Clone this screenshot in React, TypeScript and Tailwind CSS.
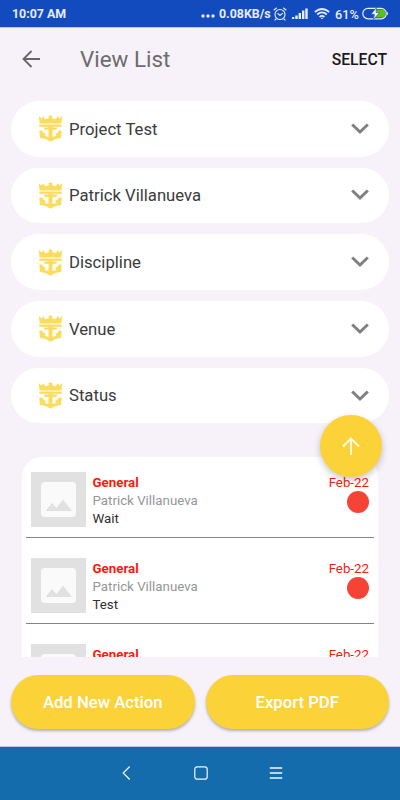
const FILTERS = ["Project Test", "Patrick Villanueva", "Discipline", "Venue", "Status"];

const ACTIONS = [
  { category: "General", owner: "Patrick Villanueva", note: "Wait", date: "Feb-22" },
  { category: "General", owner: "Patrick Villanueva", note: "Test", date: "Feb-22" },
  { category: "General", owner: "Patrick Villanueva", note: "", date: "Feb-22" },
];

function CrownAnchor() {
  return (
    <svg viewBox="0 0 74 82" className="w-[25px] h-[27px] shrink-0" fill="#fbdc5e">
      <path d="M1 3L9 11L15 4L21 13L31 10L33 8L30 5L37 0L44 5L41 8L43 10L53 13L59 4L65 11L73 3L70 26H4Z" />
      <path d="M3 29H71V36H3Z" />
      <path d="M30 36H44V38H56V45H43V66H48Q54 65 55 61L49 58Q59 55 63 47H71L69 70Q51 71 37 81Q23 71 5 70L3 47H11Q15 55 25 58L19 61Q20 65 26 66H31V45H18V38H30Z" />
    </svg>
  );
}

function Thumbnail() {
  return (
    <svg viewBox="0 0 55 55" className="w-[55px] h-[55px] shrink-0">
      <rect width="55" height="55" fill="#e1e1e1" />
      <rect x="10" y="10" width="35" height="35" rx="4" fill="#fafafa" />
      <path d="M14.5 39L21 31L25.5 36L32 27.500L41 39Z" fill="#e1e1e1" />
    </svg>
  );
}

function StatusBar() {
  return (
    <div className="h-7 shrink-0 bg-[#124bbe] border-b border-[#b9c6ea] flex items-center pt-[2px] pl-3 pr-[11px] text-[12.4px] font-bold text-[#e7edfb]">
      <span>10:07 AM</span>
      <div className="ml-auto flex items-center">
        <svg viewBox="0 0 14 4" className="w-[14px] h-1 mt-1 mr-1" fill="#e7edfb">
          <circle cx="2" cy="2" r="1.700" />
          <circle cx="7" cy="2" r="1.700" />
          <circle cx="12" cy="2" r="1.700" />
        </svg>
        <span className="w-[51px] whitespace-nowrap">0.08KB/s</span>
        <svg viewBox="0 0 14 14" className="w-[14px] h-[14px] ml-[3px] -mt-px" fill="none" stroke="#e7edfb" strokeWidth="1.100" strokeLinecap="round">
          <circle cx="7" cy="7.500" r="5" />
          <path d="M1 3L3.500 1M13 3L10.500 1M4.800 6.500L7 8.500L9.500 6.300M3 12L2 13M11 12L12 13" />
        </svg>
        <svg viewBox="0 0 16 12" className="w-4 h-3 ml-[5px] -mt-px" fill="#e7edfb">
          <path d="M0 9H2.300V11H0ZM3.300 7.500H5.700V11H3.300ZM6.600 5H9V11H6.600ZM10 2.500H12.400V11H10ZM13.300 0.500H15.700V11H13.300Z" />
        </svg>
        <svg viewBox="0 0 16 12" className="w-4 h-3 ml-[6px] -mt-px" fill="none" stroke="#e7edfb" strokeWidth="1.700">
          <path d="M0.800 4Q8 -2 15.200 4M3.200 6.500Q8 2.300 12.800 6.500M5.500 8.800Q8 6.800 10.500 8.800" />
          <path d="M6.500 9.800H9.500L8 11.300Z" fill="#e7edfb" stroke="none" />
        </svg>
        <span className="ml-[5px] w-[24px] whitespace-nowrap font-medium text-[12.700px]">61%</span>
        <svg viewBox="0 0 27 13" className="w-[27px] h-[13px] ml-[3px] -mt-px">
          <rect x="0.800" y="1.300" width="23.500" height="10.500" rx="5.200" fill="none" stroke="#e7edfb" strokeWidth="1.200" />
          <path d="M14 2.500H19.500A4 4 0 0 1 19.500 10.600H11Z" fill="#5ac50c" />
          <path d="M25 4.500Q27 6.500 25 8.500Z" fill="#e7edfb" />
          <path d="M14.500 0.500L9 7.300H12.500L11.500 12.500L17.500 5.600H14Z" fill="#f4f7ff" stroke="#124bbe" strokeWidth="0.600" />
        </svg>
      </div>
    </div>
  );
}

function FilterCard({ label }: { label: string }) {
  return (
    <button className="w-full h-[55.500px] rounded-full bg-white flex items-center pl-[27px] pr-5 text-left">
      <CrownAnchor />
      <span className="ml-[6px] pt-[1px] text-[16.700px] text-[#3b3b3b]">{label}</span>
      <svg viewBox="0 0 18 12" className="w-[18px] h-3 ml-auto" fill="none" stroke="#808080" strokeWidth="3">
        <path d="M1.200 1.500L9 9L16.800 1.500" />
      </svg>
    </button>
  );
}

function ActionRow({ action }: { action: (typeof ACTIONS)[number] }) {
  return (
    <div className="mx-1 h-[86px] shrink-0 border-b border-[#858589] flex items-start pt-[20px] pl-[5px] pr-[5px]">
      <Thumbnail />
      <div className="ml-[6.500px] pt-[2px] text-[13.300px] leading-[18.200px]">
        <p className="font-bold text-[#f91b0c]">{action.category}</p>
        <p className="text-[#969696]">{action.owner}</p>
        {action.note && <p className="text-[#303030]">{action.note}</p>}
      </div>
      <div className="ml-auto flex flex-col items-end">
        <span className="pt-[2px] text-[13.300px] leading-[18px] text-[#f91b0c]">{action.date}</span>
        <span className="w-[22px] h-[22px] -mt-[0.500px] rounded-full bg-[#f54336]" />
      </div>
    </div>
  );
}

export default function App() {
  return (
    <div className="relative w-[400px] h-[800px] overflow-hidden flex flex-col bg-[#f7f2f9] font-['Roboto',sans-serif]">
      <StatusBar />

      <header className="h-[73px] shrink-0 flex items-center pl-[22px] pr-[13px] pb-[11px]">
        <svg viewBox="0 0 18 18" className="w-[18px] h-[18px]" fill="none" stroke="#666" strokeWidth="1.800">
          <path d="M18 9H1.500M9.500 1L1.500 9L9.500 17" />
        </svg>
        <h1 className="ml-10 pt-[2px] text-[22.400px] text-[#6d6b6e]">View List</h1>
        <button className="ml-auto pt-[2px] text-[15.700px] font-medium text-[#191919]">SELECT</button>
      </header>

      <div className="shrink-0 px-[11px] flex flex-col gap-[11.200px]">
        {FILTERS.map((label) => (
          <FilterCard key={label} label={label} />
        ))}
      </div>

      <section className="mx-[22px] mt-[33.500px] h-[200.500px] shrink-0 overflow-hidden rounded-t-[20px] bg-white">
        <div className="-mt-[5px]">
          {ACTIONS.map((action, i) => (
            <ActionRow key={i} action={action} />
          ))}
        </div>
      </section>

      <div className="shrink-0 mt-[18px] px-[11px] flex gap-[11px] text-[16.700px] font-medium text-white">
        <button className="flex-1 h-[54px] pt-[1px] rounded-full bg-[#fbd338] shadow-[0_2px_3px_rgba(0,0,0,0.28)]">Add New Action</button>
        <button className="flex-1 h-[54px] pt-[1px] rounded-full bg-[#fbd338] shadow-[0_2px_3px_rgba(0,0,0,0.28)]">Export PDF</button>
      </div>

      <nav className="mt-auto h-[54px] shrink-0 bg-[#156cac] border-t border-[#bfc8da] pl-[120px] pb-[1px] flex items-center">
        <svg viewBox="0 0 14 14" className="w-[14px] h-[14px]" fill="none" stroke="#f1f6fb" strokeWidth="1.200">
          <path d="M9.700 0.500L3.200 7L9.700 13.500" />
        </svg>
        <svg viewBox="0 0 14 14" className="w-[14px] h-[14px] ml-[60px]" fill="none" stroke="#f1f6fb" strokeWidth="1.200">
          <rect x="0.800" y="0.800" width="12.400" height="12.400" rx="2.500" />
        </svg>
        <svg viewBox="0 0 14 14" className="w-[14px] h-[14px] ml-[61px]" fill="none" stroke="#f1f6fb" strokeWidth="1.300">
          <path d="M0.800 2H13.200M0.800 7H13.200M0.800 12H13.200" />
        </svg>
      </nav>

      <button className="absolute left-[320px] top-[414.500px] w-[62px] h-[62px] rounded-full bg-[#fbd338] shadow-[0_3px_7px_rgba(0,0,0,0.22)] flex items-center justify-center">
        <svg viewBox="0 0 18 18" className="w-[18px] h-[18px]" fill="none" stroke="#fffbea" strokeWidth="1.800">
          <path d="M9 18V1.500M1 9.500L9 1.500L17 9.500" />
        </svg>
      </button>
    </div>
  );
}
